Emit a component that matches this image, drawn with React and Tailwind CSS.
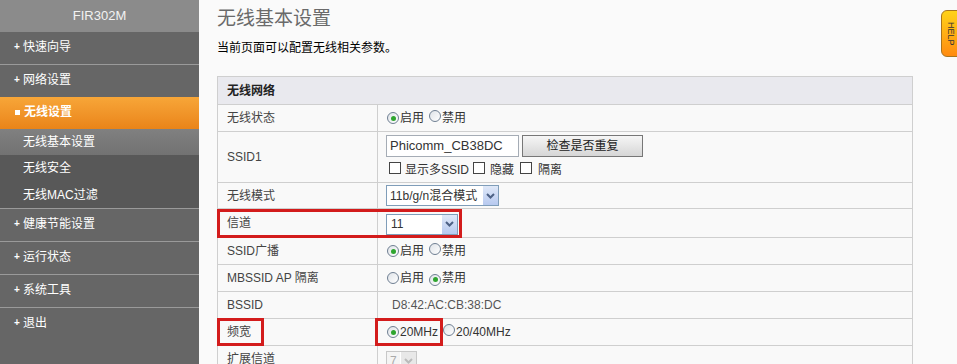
import React from "react";

const font = { fontFamily: '"Liberation Sans", "Noto Sans CJK SC", sans-serif' };

function Radio({ checked }) {
  return (
    <span className="inline-flex h-[12px] w-[12px] items-center justify-center rounded-full border border-[#6f7f92] bg-gradient-to-br from-[#dfe3e8] to-white">
      {checked && <span className="h-[5px] w-[5px] rounded-full bg-[#2fa52f]" />}
    </span>
  );
}

function Check() {
  return <span className="inline-block h-[12px] w-[12px] border border-[#444] bg-white" />;
}

function Arrow({ disabled }) {
  return (
    <span
      className={
        "flex h-full w-[16px] items-center justify-center border-l border-white " +
        (disabled ? "bg-[#e8e8e8]" : "bg-gradient-to-b from-[#dfe8f8] to-[#b7c9ef]")
      }
    >
      <svg width="9" height="6" viewBox="0 0 9 6">
        <path d="M1 1 L4.5 4.5 L8 1" fill="none" stroke={disabled ? "#bbb" : "#4d6185"} strokeWidth="2" />
      </svg>
    </span>
  );
}

function Row({ label, h, children, extra }) {
  return (
    <div className={"relative flex border-b border-[#cfcfcf] " + h}>
      <div className="flex w-[160px] shrink-0 items-center border-r border-[#cfcfcf] pl-[9px] text-[12px] text-[#444]">
        {label}
      </div>
      <div className="flex flex-1 items-center pl-[9px] text-[12px] text-[#333]">{children}</div>
      {extra}
    </div>
  );
}

function RadioPair({ a, b, first }) {
  return (
    <div className="flex items-center">
      <Radio checked={first} />
      <span className="ml-[1px]">{a}</span>
      <span className="ml-[5px]"><Radio checked={!first} /></span>
      <span className="ml-[1px]">{b}</span>
    </div>
  );
}

function SideItem({ text, bullet = "plus", active, className = "" }) {
  return (
    <div
      className={
        "flex items-center pb-[2px] pl-[14px] text-[12px] text-white " +
        (active ? "bg-gradient-to-b from-[#f7a638] to-[#ea8418] font-bold" : "bg-[#666]") +
        " " + className
      }
    >
      {bullet === "plus" ? (
        <span className="mr-[2px] w-[7px] text-[10px] font-bold leading-none">+</span>
      ) : (
        <span className="mr-[4px] ml-[1px] inline-block h-[5px] w-[5px] bg-white" />
      )}
      <span>{text}</span>
    </div>
  );
}

export default function App() {
  return (
    <div className="flex h-[364px] w-[957px] overflow-hidden bg-[#fafafa]" style={font}>
      {/* Sidebar */}
      <div className="flex h-full w-[199px] shrink-0 flex-col bg-[#666]">
        <div className="flex h-[32px] items-center justify-center bg-[#8b8b8b] text-[13px] text-[#f2f2f2]">FIR302M</div>
        <SideItem text="快速向导" className="h-[33px] border-b border-[#9a9a9a]" />
        <SideItem text="网络设置" className="h-[32px]" />
        <SideItem text="无线设置" bullet="square" active className="h-[32px]" />
        <div className="flex h-[26px] items-center bg-gradient-to-b from-[#808080] to-[#727272] pb-[1px] pl-[23px] text-[12px] text-white">无线基本设置</div>
        <div className="flex h-[27px] items-center bg-[#585858] pb-[1px] pl-[23px] text-[12px] text-white">无线安全</div>
        <div className="flex h-[27px] items-center border-b border-[#9a9a9a] bg-[#585858] pb-[1px] pl-[23px] text-[12px] text-white">无线MAC过滤</div>
        <SideItem text="健康节能设置" className="h-[33px] border-b border-[#9a9a9a]" />
        <SideItem text="运行状态" className="h-[33px] border-b border-[#9a9a9a]" />
        <SideItem text="系统工具" className="h-[33px] border-b border-[#9a9a9a]" />
        <SideItem text="退出" className="h-[32px]" />
      </div>

      {/* Main */}
      <div className="relative flex-1 pl-[18px]">
        <div className="mt-[7px] h-[24px] text-[19px] leading-[24px] text-[#6a6a6a]">无线基本设置</div>
        <div className="mt-[9px] h-[16px] text-[12px] leading-[16px] text-black">当前页面可以配置无线相关参数。</div>

        <div className="mt-[20px] w-[696px] border-x border-t border-[#cfcfcf] bg-[#f9f9f9]">
          <div className="flex h-[28px] items-center border-b border-[#cfcfcf] bg-[#e9e9ee] pl-[9px] text-[12px] font-bold text-[#222]">无线网络</div>

          <Row label="无线状态" h="h-[27px]">
            <RadioPair a="启用" b="禁用" first />
          </Row>

          <Row label="SSID1" h="h-[51px]">
            <div className="flex flex-col">
              <div className="flex items-center">
                <div className="ml-[-1px] flex h-[22px] w-[133px] items-center border border-[#a5acb5] bg-white pl-[3px] text-[13px] text-[#333]">Phicomm_CB38DC</div>
                <div className="ml-[3px] flex h-[22px] w-[121px] items-center justify-center border border-[#777] bg-gradient-to-b from-[#f6f6f6] to-[#d6d6d6] text-[12px] text-[#222]">检查是否重复</div>
              </div>
              <div className="mt-[4px] flex items-center">
                <span className="ml-[2px]"><Check /></span>
                <span className="ml-[4px]">显示多SSID</span>
                <span className="ml-[4px]"><Check /></span>
                <span className="ml-[5px]">隐藏</span>
                <span className="ml-[6px]"><Check /></span>
                <span className="ml-[6px]">隔离</span>
              </div>
            </div>
          </Row>

          <Row label="无线模式" h="h-[26px]">
            <div className="ml-[-1px] flex h-[21px] w-[113px] items-center justify-between border border-[#7f9db9] bg-white pl-[3px] text-[12px] text-[#333]">
              <span>11b/g/n混合模式</span>
              <Arrow />
            </div>
          </Row>

          <Row
            label="信道"
            h="h-[29px]"
            extra={<div className="pointer-events-none absolute left-[-1px] top-0 h-[29px] w-[245px] border-[3px] border-[#d31c1c]" />}
          >
            <div className="ml-[-1px] mt-[2px] flex h-[21px] w-[72px] items-center justify-between border border-[#7f9db9] bg-white pl-[4px] text-[12px] text-[#333]">
              <span>11</span>
              <Arrow />
            </div>
          </Row>

          <Row label="SSID广播" h="h-[27px]">
            <RadioPair a="启用" b="禁用" first />
          </Row>

          <Row label="MBSSID AP 隔离" h="h-[27px]">
            <RadioPair a="启用" b="禁用" first={false} />
          </Row>

          <Row label="BSSID" h="h-[27px]">
            <span className="ml-[5px] text-[#555]">D8:42:AC:CB:38:DC</span>
          </Row>

          <Row
            label="频宽"
            h="h-[27px]"
            extra={
              <>
                <div className="pointer-events-none absolute left-[-1px] top-[-1px] h-[28px] w-[47px] border-[3px] border-[#d31c1c]" />
                <div className="pointer-events-none absolute left-[157px] top-[-1px] h-[28px] w-[68px] border-[3px] border-[#d31c1c]" />
              </>
            }
          >
            <RadioPair a="20MHz" b="20/40MHz" first />
          </Row>

          <Row label="扩展信道" h="h-[27px]">
            <div className="ml-[-1px] mt-[4px] flex h-[21px] w-[31px] items-center justify-between border border-[#c8c8c8] bg-[#f4f4f4] pl-[3px] text-[12px] text-[#aaa]">
              <span>7</span>
              <Arrow disabled />
            </div>
          </Row>
        </div>

        {/* HELP tab */}
        <div className="absolute right-[-5px] top-[10px] flex h-[47px] w-[21px] items-center justify-center rounded-l-[6px] border border-[#a8741e] bg-gradient-to-b from-[#ffd21a] to-[#ff8a10]">
          <span className="pr-[3px] text-[9px] text-[#333]" style={{ writingMode: "vertical-rl" }}>HELP</span>
        </div>
      </div>
    </div>
  );
}
